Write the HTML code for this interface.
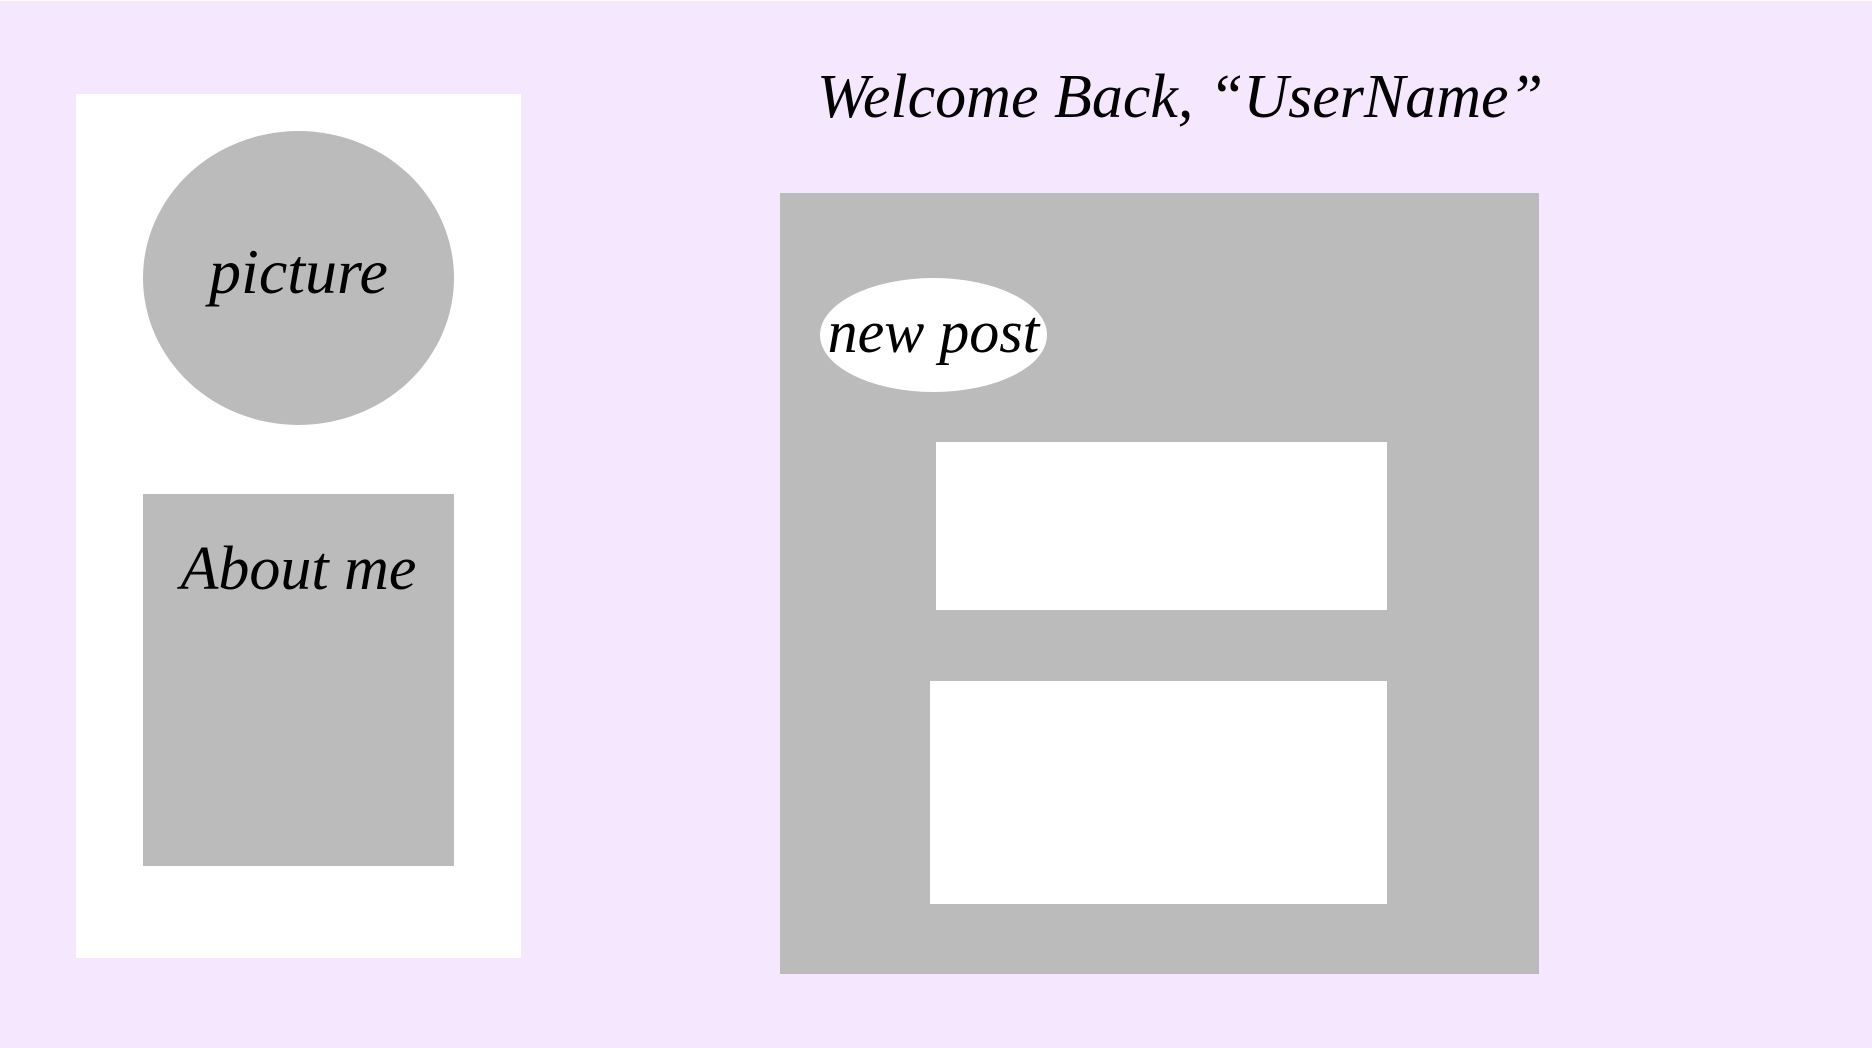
<!DOCTYPE html>
<html><head><meta charset="utf-8"><style>
html,body{margin:0;padding:0;}
body{width:1872px;height:1048px;background:#f5e7fd;position:relative;overflow:hidden;font-family:"Liberation Serif",serif;font-style:italic;color:#000;}
div{position:absolute;box-sizing:border-box;}
.t{display:flex;align-items:center;justify-content:center;white-space:nowrap;}
</style></head><body>
<div style="left:0;top:0;width:1872px;height:1px;background:#fff"></div>
<div style="left:76px;top:94px;width:445px;height:864px;background:#fff"></div>
<div class="t" style="left:143px;top:131px;width:311px;height:294px;border-radius:50%;background:#bbb;font-size:64px;padding-bottom:12px">picture</div>
<div class="t" style="left:143px;top:494px;width:311px;height:372px;background:#bbb;font-size:62px;align-items:flex-start;padding-top:40px">About me</div>
<div class="t" style="left:780px;top:52px;width:800px;height:90px;font-size:62px">Welcome Back, “UserName”</div>
<div style="left:780px;top:193px;width:759px;height:781px;background:#bbb"></div>
<div class="t" style="left:820px;top:278px;width:227px;height:114px;border-radius:50%;background:#fff;font-size:60px;padding-bottom:6px">new post</div>
<div style="left:936px;top:442px;width:451px;height:168px;background:#fff"></div>
<div style="left:930px;top:681px;width:457px;height:223px;background:#fff"></div>
</body></html>
